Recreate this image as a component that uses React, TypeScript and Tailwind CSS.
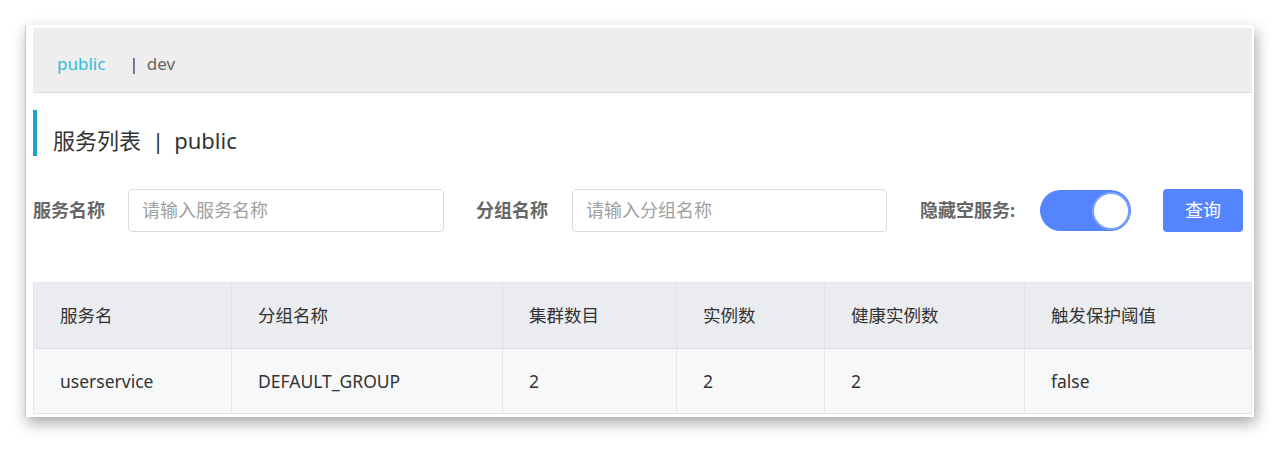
import React from "react";

const font = { fontFamily: '"Noto Sans", "Noto Sans CJK SC", sans-serif' };

export default function App() {
  const headers = ["服务名", "分组名称", "集群数目", "实例数", "健康实例数", "触发保护阈值"];
  const row = ["userservice", "DEFAULT_GROUP", "2", "2", "2", "false"];
  return (
    <div className="w-[1280px] h-[449px] bg-white overflow-hidden" style={font}>
      <div className="ml-[25px] mt-[25px] w-[1229px] h-[392px] bg-white pl-[7px] pt-[3px] pr-[2px] border-l border-[#c8c8c8] shadow-[2px_6px_14px_rgba(0,0,0,0.35)]">
        <div className="h-[65px] bg-[#eeeeee] border-b border-[#dadada] flex items-center pl-[24px] pt-[7px] text-[17px]">
          <span className="text-[#2fbfe0]">public</span>
          <span className="ml-[24px] text-[#7a2424]">|</span>
          <span className="ml-[8px] text-[#666666]">dev</span>
        </div>
        <div className="mt-[17px] h-[46px] border-l-4 border-[#1da1d2] pl-[16px] pt-[14px] flex items-center text-[22px] text-[#333333]">
          <span>服务列表</span>
          <span className="ml-[11px]">|</span>
          <span className="ml-[10px]">public</span>
        </div>
        <div className="mt-[33px] flex items-center h-[43px] text-[18px]">
          <span className="font-bold text-[#666666] w-[95px] whitespace-nowrap">服务名称</span>
          <div className="w-[316px] h-[43px] border border-[#d8dade] rounded-[4px] flex items-center pl-[13px] text-[#a0a0a0]">
            请输入服务名称
          </div>
          <span className="ml-[32px] font-bold text-[#666666] w-[96px] whitespace-nowrap">分组名称</span>
          <div className="w-[315px] h-[43px] border border-[#d8dade] rounded-[4px] flex items-center pl-[13px] text-[#a0a0a0]">
            请输入分组名称
          </div>
          <span className="ml-[33px] font-bold text-[#666666] w-[120px] whitespace-nowrap">隐藏空服务:</span>
          <div className="w-[91px] h-[41px] rounded-full bg-[#5584ff] flex items-center justify-end pr-[1px]">
            <div className="w-[38px] h-[38px] rounded-full bg-white border-2 border-[#7aa0ff]" />
          </div>
          <div className="ml-[32px] w-[80px] h-[43px] rounded-[4px] bg-[#5584ff] text-white flex items-center justify-center">
            查询
          </div>
        </div>
        <div className="mt-[50px] border border-[#e2e4e8] text-[17.5px] text-[#333333]">
          <div className="grid grid-cols-[198px_271px_174px_148px_200px_1fr] h-[66px] bg-[#ebecf0] border-b border-[#dfe1e5]">
            {headers.map((h, i) => (
              <div key={i} className={`flex items-center px-[26px] ${i < 5 ? "border-r border-[#dfe1e5]" : ""}`}>
                {h}
              </div>
            ))}
          </div>
          <div className="grid grid-cols-[198px_271px_174px_148px_200px_1fr] h-[64px] bg-[#f7f8fa]">
            {row.map((c, i) => (
              <div key={i} className={`flex items-center px-[26px] ${i < 5 ? "border-r border-[#e2e4e8]" : ""}`}>
                {c}
              </div>
            ))}
          </div>
        </div>
      </div>
    </div>
  );
}
